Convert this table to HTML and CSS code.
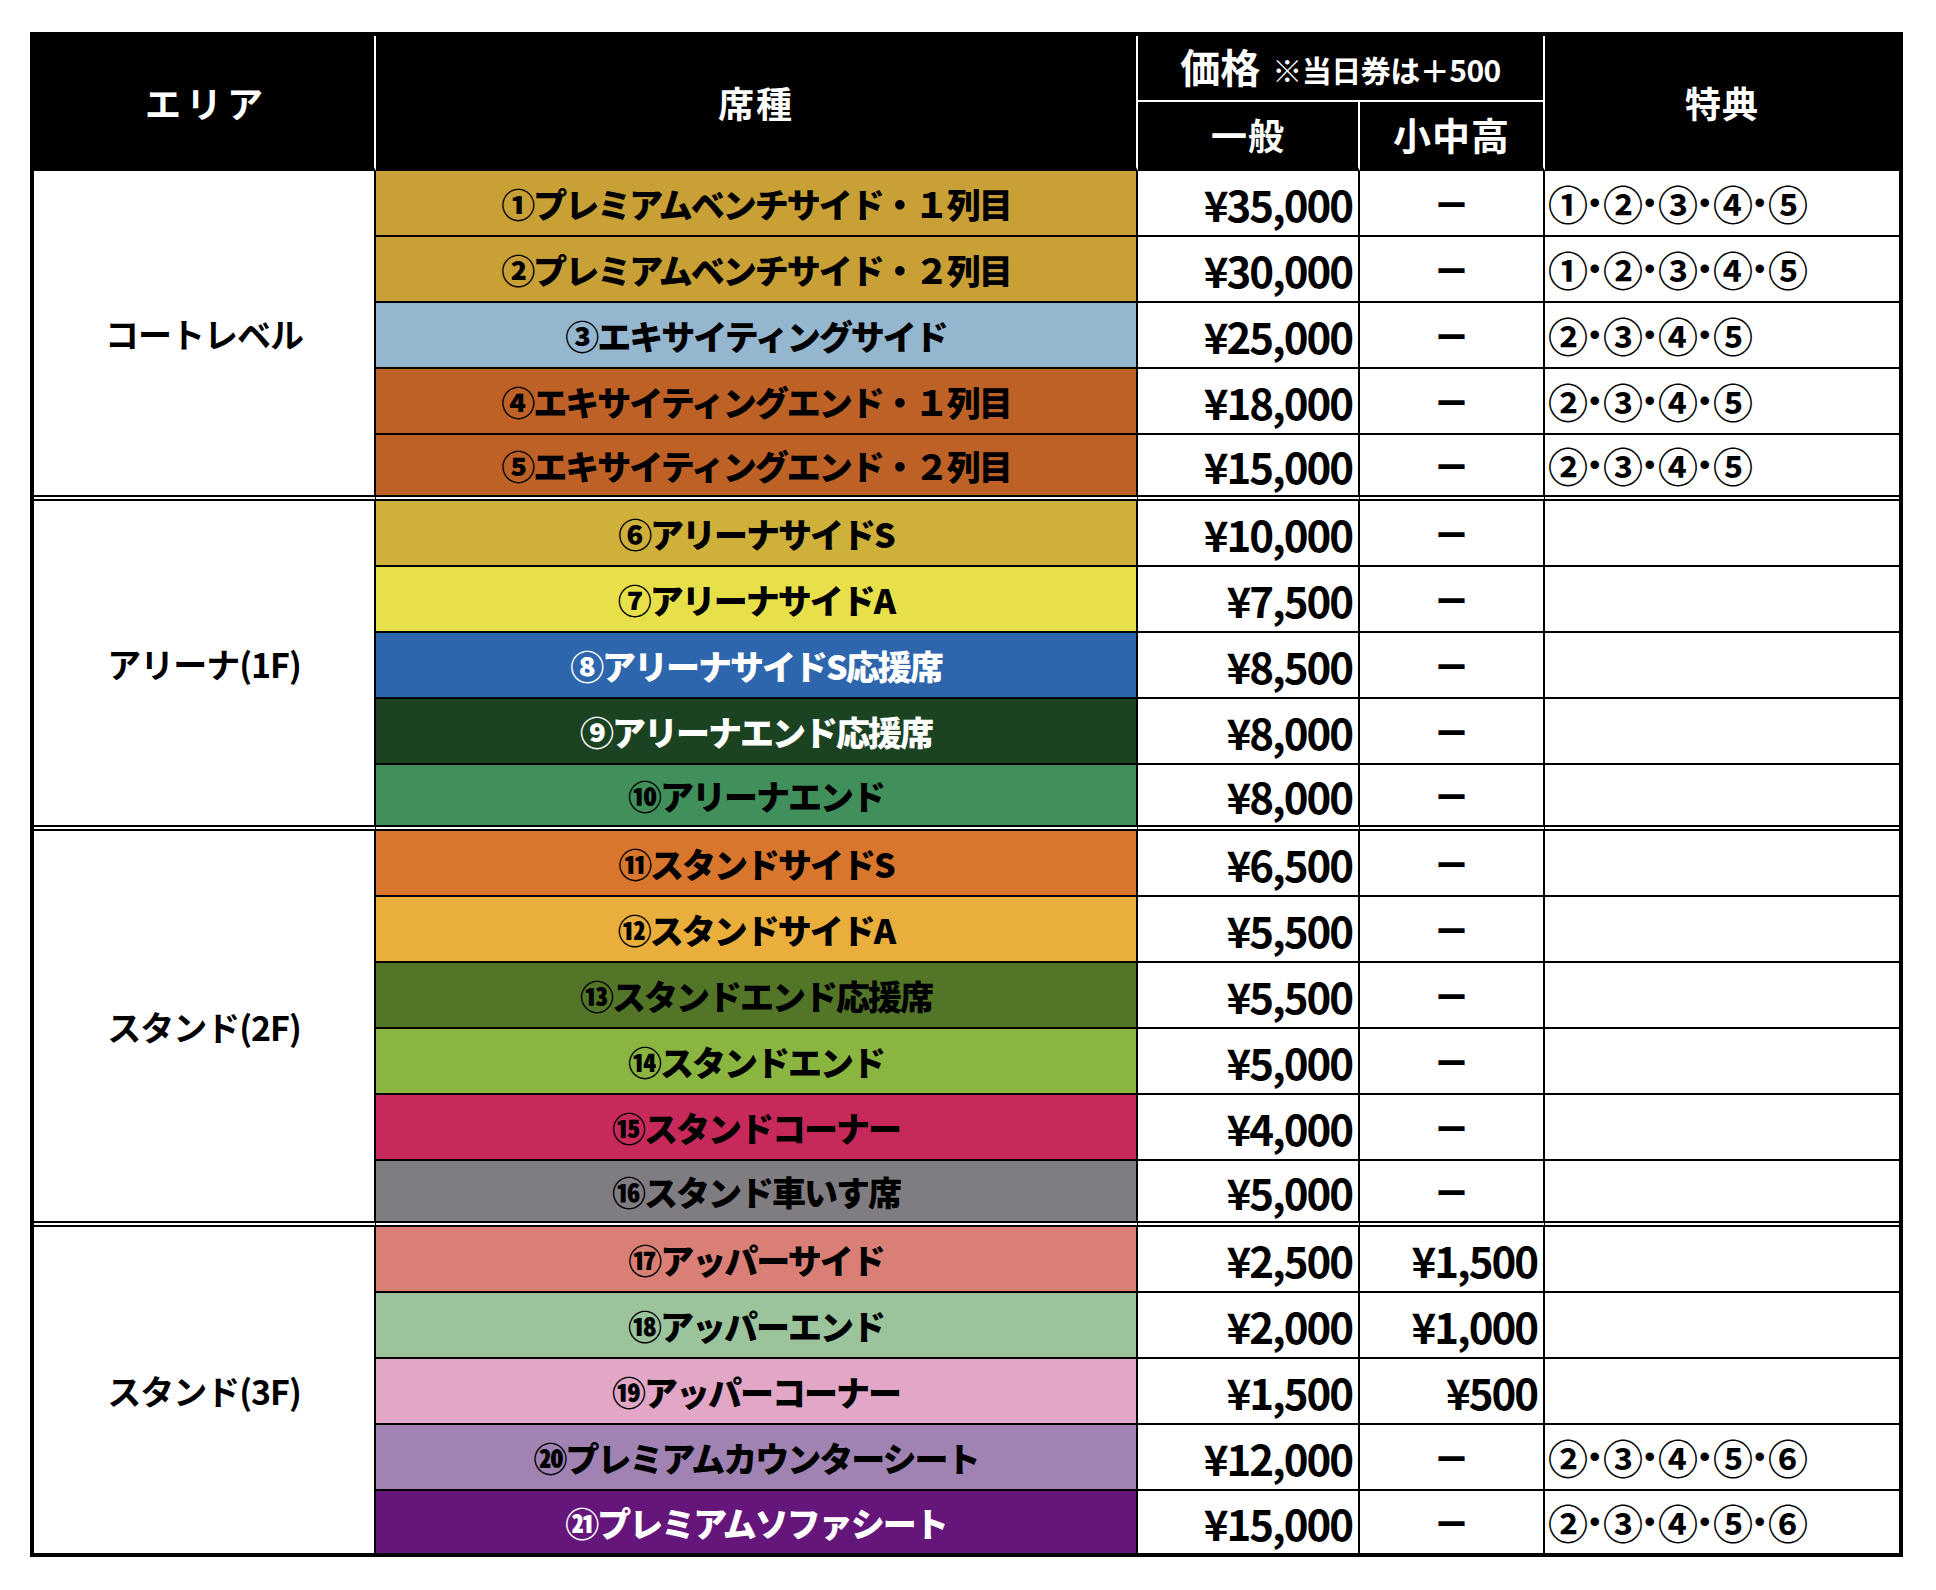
FILE: index.html
```html
<!DOCTYPE html>
<html lang="ja">
<head>
<meta charset="utf-8">
<title>席種・価格表</title>
<link rel="stylesheet" href="styles.css">
</head>
<body>
<div class="price-table">
  <div class="hd hd-area span2"><span class="spaced">エリア</span></div>
  <div class="hd hd-seat span2">席種</div>
  <div class="hd hd-price"><span class="big">価格</span><span class="note">※当日券は＋500</span></div>
  <div class="hd hd-benefit span2 last-col">特典</div>
  <div class="hd hd-sub">一般</div>
  <div class="hd hd-sub">小中高</div>

  <div class="area g-end rows5">コートレベル</div>
  <div class="seat s1">①プレミアムベンチサイド・１列目</div>
  <div class="price">¥35,000</div>
  <div class="kid dash">ー</div>
  <div class="benefit last-col">①<span class="sep">•</span>②<span class="sep">•</span>③<span class="sep">•</span>④<span class="sep">•</span>⑤</div>

  <div class="seat s2">②プレミアムベンチサイド・２列目</div>
  <div class="price">¥30,000</div>
  <div class="kid dash">ー</div>
  <div class="benefit last-col">①<span class="sep">•</span>②<span class="sep">•</span>③<span class="sep">•</span>④<span class="sep">•</span>⑤</div>

  <div class="seat s3">③エキサイティングサイド</div>
  <div class="price">¥25,000</div>
  <div class="kid dash">ー</div>
  <div class="benefit last-col">②<span class="sep">•</span>③<span class="sep">•</span>④<span class="sep">•</span>⑤</div>

  <div class="seat s4">④エキサイティングエンド・１列目</div>
  <div class="price">¥18,000</div>
  <div class="kid dash">ー</div>
  <div class="benefit last-col">②<span class="sep">•</span>③<span class="sep">•</span>④<span class="sep">•</span>⑤</div>

  <div class="seat s5 g-end">⑤エキサイティングエンド・２列目</div>
  <div class="price g-end">¥15,000</div>
  <div class="kid dash g-end">ー</div>
  <div class="benefit last-col g-end">②<span class="sep">•</span>③<span class="sep">•</span>④<span class="sep">•</span>⑤</div>

  <div class="area g-end rows5">アリーナ(1F)</div>
  <div class="seat s6">⑥アリーナサイドS</div>
  <div class="price">¥10,000</div>
  <div class="kid dash">ー</div>
  <div class="benefit last-col"></div>

  <div class="seat s7">⑦アリーナサイドA</div>
  <div class="price">¥7,500</div>
  <div class="kid dash">ー</div>
  <div class="benefit last-col"></div>

  <div class="seat s8 light">⑧アリーナサイドS応援席</div>
  <div class="price">¥8,500</div>
  <div class="kid dash">ー</div>
  <div class="benefit last-col"></div>

  <div class="seat s9 light">⑨アリーナエンド応援席</div>
  <div class="price">¥8,000</div>
  <div class="kid dash">ー</div>
  <div class="benefit last-col"></div>

  <div class="seat s10 g-end">⑩アリーナエンド</div>
  <div class="price g-end">¥8,000</div>
  <div class="kid dash g-end">ー</div>
  <div class="benefit last-col g-end"></div>

  <div class="area g-end rows6">スタンド(2F)</div>
  <div class="seat s11">⑪スタンドサイドS</div>
  <div class="price">¥6,500</div>
  <div class="kid dash">ー</div>
  <div class="benefit last-col"></div>

  <div class="seat s12">⑫スタンドサイドA</div>
  <div class="price">¥5,500</div>
  <div class="kid dash">ー</div>
  <div class="benefit last-col"></div>

  <div class="seat s13">⑬スタンドエンド応援席</div>
  <div class="price">¥5,500</div>
  <div class="kid dash">ー</div>
  <div class="benefit last-col"></div>

  <div class="seat s14">⑭スタンドエンド</div>
  <div class="price">¥5,000</div>
  <div class="kid dash">ー</div>
  <div class="benefit last-col"></div>

  <div class="seat s15">⑮スタンドコーナー</div>
  <div class="price">¥4,000</div>
  <div class="kid dash">ー</div>
  <div class="benefit last-col"></div>

  <div class="seat s16 g-end">⑯スタンド車いす席</div>
  <div class="price g-end">¥5,000</div>
  <div class="kid dash g-end">ー</div>
  <div class="benefit last-col g-end"></div>

  <div class="area rows5 last-row">スタンド(3F)</div>
  <div class="seat s17">⑰アッパーサイド</div>
  <div class="price">¥2,500</div>
  <div class="kid">¥1,500</div>
  <div class="benefit last-col"></div>

  <div class="seat s18">⑱アッパーエンド</div>
  <div class="price">¥2,000</div>
  <div class="kid">¥1,000</div>
  <div class="benefit last-col"></div>

  <div class="seat s19">⑲アッパーコーナー</div>
  <div class="price">¥1,500</div>
  <div class="kid">¥500</div>
  <div class="benefit last-col"></div>

  <div class="seat s20">⑳プレミアムカウンターシート</div>
  <div class="price">¥12,000</div>
  <div class="kid dash">ー</div>
  <div class="benefit last-col">②<span class="sep">•</span>③<span class="sep">•</span>④<span class="sep">•</span>⑤<span class="sep">•</span>⑥</div>

  <div class="seat s21 light last-row">㉑プレミアムソファシート</div>
  <div class="price last-row">¥15,000</div>
  <div class="kid dash last-row">ー</div>
  <div class="benefit last-col last-row">②<span class="sep">•</span>③<span class="sep">•</span>④<span class="sep">•</span>⑤<span class="sep">•</span>⑥</div>
</div>
</body>
</html>
```
FILE: styles.css
```css
html, body {
  margin: 0;
  padding: 0;
  background: #fff;
}

body {
  font-family: "Noto Sans CJK JP", "Noto Sans", sans-serif;
  font-weight: 700;
  color: #000;
}

.price-table {
  display: grid;
  grid-template-columns: 342px 762px 222px 185px 354px;
  grid-template-rows: 66px 69px repeat(20, 66px) 62px;
  width: max-content;
  margin: 32px 0 0 30px;
  border: 4px solid #000;
  background: #fff;
}

.price-table > div {
  box-sizing: border-box;
  display: flex;
  align-items: center;
  border-right: 2px solid #000;
  border-bottom: 2px solid #000;
  white-space: nowrap;
  min-width: 0;
}

.price-table > .last-col { border-right: none; }
.price-table > .last-row { border-bottom: none; }
.price-table > .g-end { border-bottom: 6px double #000; }

/* header */
.price-table > .hd {
  background: #000;
  color: #fff;
  justify-content: center;
  border-right-color: #fff;
  border-bottom: 4px solid #000;
  font-size: 36px;
  line-height: 1;
}
.price-table > .hd.last-col { border-right: none; }
.span2 { grid-row: span 2; }
.hd-area .spaced { letter-spacing: 5px; padding-left: 5px; }
.hd-seat { letter-spacing: 2px; }
.hd-benefit { letter-spacing: 1px; }
.price-table > .hd-price {
  grid-column: span 2;
  border-bottom: 2px solid #fff;
  gap: 12px;
  padding-bottom: 4px;
}
.hd-price .big { font-size: 40px; }
.hd-price .note { font-size: 30px; padding-top: 6px; letter-spacing: -0.5px; }
.hd-sub { font-size: 37px; letter-spacing: 1px; }
.price-table > .hd-sub { padding-bottom: 2px; }
.hd-sub + .hd-sub { font-size: 38px; }

/* body */
.area {
  justify-content: center;
  font-size: 34px;
  letter-spacing: -1px;
}
.rows5 { grid-row: span 5; }
.rows6 { grid-row: span 6; }

.seat {
  justify-content: center;
  font-size: 34px;
  font-weight: 900;
  letter-spacing: -2px;
  background-clip: padding-box;
}
.seat.light { color: #fff; }

.price, .kid {
  justify-content: flex-end;
  padding-right: 6px;
  font-size: 42px;
  letter-spacing: -2px;
}
.kid.dash {
  justify-content: center;
  padding-right: 0;
  font-size: 32px;
  letter-spacing: 0;
}

.benefit {
  justify-content: flex-start;
  padding-left: 3px;
  font-size: 40px;
  letter-spacing: -1.5px;
}
.benefit .sep {
  font-family: "Liberation Sans", sans-serif;
  font-size: 30px;
  padding: 0 3px;
  letter-spacing: 0;
}

/* seat colours */
.s1, .s2 { background-color: #c9a035; }
.s3 { background-color: #94b6cf; }
.s4, .s5 { background-color: #bd6126; }
.s6 { background-color: #cfb03a; }
.s7 { background-color: #e8e04a; }
.s8 { background-color: #2d66ad; }
.s9 { background-color: #1b4322; }
.s10 { background-color: #41905c; }
.s11 { background-color: #d9762d; }
.s12 { background-color: #eaae3c; }
.s13 { background-color: #537528; }
.s14 { background-color: #8ab541; }
.s15 { background-color: #c8295b; }
.s16 { background-color: #7f7d81; }
.s17 { background-color: #d97f76; }
.s18 { background-color: #9bc49d; }
.s19 { background-color: #e2a6c7; }
.s20 { background-color: #a083b2; }
.s21 { background-color: #65167a; }
```
